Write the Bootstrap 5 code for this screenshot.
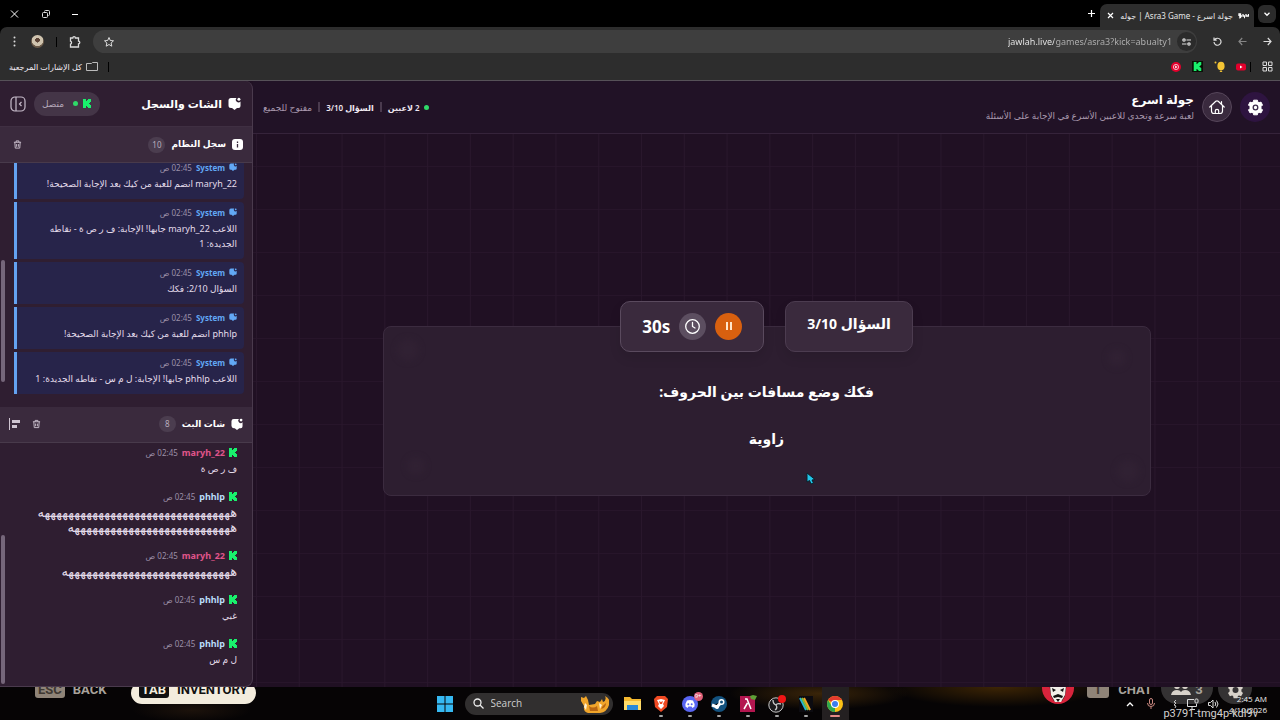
<!DOCTYPE html>
<html lang="ar" dir="rtl">
<head>
<meta charset="utf-8">
<meta name="viewport" content="width=device-width, initial-scale=1">
<title>جولة اسرع - Asra3 Game | جوله</title>
<link href="https://cdn.jsdelivr.net/npm/bootstrap@5.3.0/dist/css/bootstrap.min.css" rel="stylesheet">
<style>
  body { font-family: "Noto Sans", "DejaVu Sans", sans-serif; background: #000; color: #f4eef6; font-size: 9px; line-height: 15px; }
  button, input { font-family: inherit; }
  svg { display: block; flex: none; }
  .bare { background: none; border: 0; padding: 0; color: inherit; display: flex; align-items: center; justify-content: center; flex: none; }
  .desktop { height: 100vh; }
  .page-body { min-height: 0; background: #201023; }
  /* browser frame */
  .titlebar { height: 27px; padding: 0 4px 0 8px; }
  .window-keys { gap: 21px; }
  .tab-menu { width: 18px; height: 18px; border-radius: 6px; background: #2b2b2b; }
  .browser-tab { height: 23px; background: #2d2d2d; border-radius: 7px 7px 0 0; padding: 0 5px 0 7px; color: #e6e6e6; gap: 5px; }
  .tab-name { font-size: 8px; width: 114px; }
  .toolbar { height: 29px; background: #2d2d2d; border-radius: 7px 7px 0 0; padding: 0 8px 0 10px; color: #dcdcdc; }
  .addressbar { height: 23px; border-radius: 12px; background: #3e3e3e; padding: 0 1px 0 10px; gap: 3px; }
  .site-info { width: 19px; height: 19px; border-radius: 50%; background: #2b2b2b; }
  .url-field { font-size: 9px; line-height: 16px; width: 166px; padding: 0; border: 0; color: transparent; background: linear-gradient(90deg, #f2f2f2 46px, #b4b4b4 46px); -webkit-background-clip: text; background-clip: text; }
  .bookmarks { height: 25px; background: #2d2d2d; border-bottom: 1px solid #565158; padding: 0 7px 3px 9px; }
  .bookmarks a, .crumbs a { color: inherit; text-decoration: none; }
  .all-marks { font-size: 8px; }
  .tick { width: 1px; height: 10px; background: #000; }
  .avatar { width: 13px; height: 13px; border-radius: 50%; background: radial-gradient(circle at 50% 40%, #5b4336 0 22%, #cfc3ae 24% 55%, #6b5a49 60%); }
  /* game */
  .game { background-color: #201023; min-width: 0; }
  .game-head { height: 53px; background: #211226; border-bottom: 1px solid #35233a; padding: 0 10px; }
  .round { width: 30px; height: 30px; border-radius: 50%; }
  .round-gear { background: #2e1440; color: #fff; }
  .round-home { background: #3a2a3e; border: 1px solid #56465a; color: #fff; }
  .game-title { font-size: 12px; line-height: 16px; font-weight: 700; color: #fff; margin: 0; }
  .game-sub { font-size: 9px; color: #a898ad; }
  .crumbs { font-size: 8px; gap: 6px; color: #efe8f1; }
  .crumb-sep { width: 2px; height: 10px; background: #4a3a4e; }
  .dot { width: 5px; height: 5px; border-radius: 50%; background: #2fd968; }
  .board { background-image: linear-gradient(90deg, #29172c 1px, transparent 1px), linear-gradient(#27152a 1px, transparent 1px); background-size: calc(100% / 24) 100%, 100% 43px; background-position: 3px 0, 0 32px; }
  .question { width: 75%; max-width: 768px; background: #2d1e30; border: 1px solid #3b2b3f; border-radius: 8px; padding: 0 24px 45px; }
  .pills { margin-top: -26px; gap: 21px; }
  .pill { height: 51px; border: 1px solid #5a4a5e; border-radius: 10px; background: #3a2a3d; color: #fff; font-weight: 700; padding: 0 21px; box-shadow: 0 6px 12px #00000018; }
  .pill-count { font-size: 14px; border-color: #4c3c50; padding-bottom: 5px; }
  .pill-time { font-size: 17px; gap: 9px; }
  .disc { width: 27px; height: 27px; border-radius: 50%; }
  .disc-pause { background: #d8600f; color: #ffe6cc; }
  .disc-clock { background: #5c4e60; }
  .ask { font-size: 14px; line-height: 23px; font-weight: 700; color: #fff; margin: 0; }
  .blob { position: absolute; border-radius: 50%; background: #34243700; box-shadow: inset 0 0 0 20px #33243680; filter: blur(3px); }
  .pointer { position: absolute; left: 63%; top: 65.6%; }
  /* side panel */
  .side { width: 253px; background: #2f1e31; border: 1px solid #4a3a4d; border-left: 0; border-top: 0; border-radius: 0 8px 8px 0; }
  .side-head { height: 46px; padding: 0 11px 0 10px; border-bottom: 1px solid #3f2f42; }
  .side-title { font-size: 11px; font-weight: 700; margin: 0; color: #fff; gap: 6px; }
  .status { height: 24px; border-radius: 12px; background: #443547; padding: 0 9px 0 8px; gap: 5px; color: #b5a8b9; }
  .sec-head { height: 36px; background: #3a2a3d; border-bottom: 1px solid #483a4b; padding: 0 9px 0 9px; color: #cfc5d2; }
  .sec-title { font-size: 9px; font-weight: 700; margin: 0; color: #fff; gap: 6px; }
  .sec-tools { gap: 12px; }
  .count { width: 17px; height: 16px; border-radius: 8px; background: #4b3d4f; color: #b9adbd; font-size: 8px; line-height: 16px; text-align: center; }
  .pane { flex: 1 1 0; min-height: 0; }
  .feed { flex: 1 1 0; min-height: 0; overflow: hidden; padding: 0 8px 13px 14px; gap: 3px; }
  .feed-chat { padding-bottom: 11px; gap: 2px; }
  .msg { padding: 3px 7px 8px; flex: none; }
  .msg-log { background: #27244a; border-left: 3px solid #64a2f0; border-radius: 0 4px 4px 0; }
  .msg-head { gap: 4px; margin-bottom: 1px; font-size: 8px; }
  .msg-body { margin: 0; color: #e4dcea; font-size: 9px; }
  .laugh { font-size: 13px; line-height: 15px; display: block; white-space: nowrap; }
  .who { font-weight: 700; }
  .who-sys { color: #62a8f5; }
  .who-a { color: #e0558b; font-size: 9px; }
  .who-b { color: #b9dcf8; font-size: 9px; }
  time { color: #9c90a8; }
  .thumb { position: absolute; left: 1px; width: 4px; border-radius: 2px; background: #75667a; }
  .thumb-log { top: 40%; height: 50%; }
  .thumb-chat { top: 38%; height: 61%; }
  /* desktop strip */
  .strip { display: grid; flex: none; height: 33px; overflow: hidden; background: radial-gradient(ellipse 60px 12px at 15% 70%, #1c120b, transparent), radial-gradient(ellipse 90px 16px at 64% 20%, #3a2509, transparent), radial-gradient(ellipse 110px 20px at 78% 0, #3d2505, transparent), #060405; }
  .strip > * { grid-area: 1 / 1; }
  .hud { font-family: Roboto, sans-serif; font-weight: 700; font-size: 13px; line-height: 16px; color: #a8a29b; padding: 0 28px 0 35px; margin-top: -5px; }
  .hud-right { gap: 5px; }
  .keycap { background: #8f8478; color: #3e3832; border-radius: 3px; padding: 0 3px; }
  .inv { background: #f3ecdd; color: #111; border-radius: 12px; height: 22px; padding: 0 8px; }
  .inv .keycap { background: #111; color: #f3ecdd; }
  .hud-pill { background: #343233; border-radius: 0 0 16px 16px; height: 22px; width: 52px; }
  .hud-gear { width: 34px; }
  .taskbar { display: grid; grid-template-columns: 1fr auto 1fr; align-items: center; font-family: "Open Sans", sans-serif; }
  .apps { gap: 10px; }
  .app { position: relative; width: 19px; height: 26px; }
  .app.live::after { content: ""; position: absolute; bottom: 0; left: 7px; width: 4px; height: 2px; border-radius: 1px; background: #a5a5a5; }
  .app.front { box-shadow: 0 0 0 4px #242021; background: #242021; }
  .app.front::after { left: 4px; width: 10px; background: #e58a85; }
  .search { width: 148px; height: 22px; border-radius: 11px; background: #383535e0; padding: 0 4px 0 8px; gap: 7px; }
  .search input { background: none; border: 0; width: 80px; padding: 0; font-size: 10px; color: #ddd; }
  .search input::placeholder { color: #cfcfcf; opacity: 1; }
  .tray { gap: 9px; padding-right: 13px; color: #ddd; }
  .clock { font-size: 8px; line-height: 11px; text-align: right; color: #eee; }
  .badge-count { position: absolute; top: 1px; right: -3px; background: #e0607a; color: #fff; border-radius: 5px; font-size: 6px; line-height: 9px; padding: 0 1px; }
  .machine { position: absolute; right: 22px; bottom: 0; font-family: Roboto, sans-serif; font-size: 11px; line-height: 13px; color: #d4d2d0; }
</style>
</head>
<body>
<svg width="0" height="0" class="position-absolute" aria-hidden="true">
  <symbol id="kick" viewBox="0 0 8 9"><path fill="#19f06c" d="M0 0h3v2h1V1h1V0h3v3H7v1H6v1h1v1h1v3H5V8H4V7H3v2H0z"/></symbol>
  <symbol id="chat" viewBox="0 0 13 13"><path fill="currentColor" d="M3 1h5.500a2.500 2.500 0 0 0 4 3.500V9a2 2 0 0 1-2 2H9l-2.500 2L4 11H3a2.500 2.500 0 0 1-2.500-2.500v-5A2.500 2.500 0 0 1 3 1z"/><circle cx="10.900" cy="2.200" r="1.500" fill="currentColor"/></symbol>
  <symbol id="trash" viewBox="0 0 10 10"><path fill="none" stroke="currentColor" d="M1 2.500h8M3.500 2.500V1h3v1.500M2 2.500l.5 6.500h5L8 2.500M4 4.500v3M6 4.500v3"/></symbol>
</svg>

<div class="desktop d-flex flex-column">
  <header>
    <div class="titlebar d-flex align-items-center bg-black">
      <button class="bare tab-menu" aria-label="القائمة"><svg width="8" height="8" viewBox="0 0 8 8" fill="none" stroke="#fff" stroke-width="1.300"><path d="M1.500 2.800 4 5.300l2.500-2.500"/></svg></button>
      <div class="browser-tab d-flex align-items-center align-self-end ms-1 me-1">
        <svg width="11" height="7" viewBox="0 0 11 7" fill="none" stroke="#fff" stroke-width="1.300"><path d="M10.500 2v2H8V2M7 4H5V2M4 4H1M1 4V2h1.500v3.500L1 6M6 5.500h1"/></svg>
        <span class="tab-name text-nowrap">جولة اسرع - Asra3 Game | جوله</span>
        <button class="bare" aria-label="إغلاق التبويب"><svg width="7" height="7" viewBox="0 0 7 7" stroke="#fff" stroke-width="1.200"><path d="M1 1l5 5M6 1 1 6"/></svg></button>
      </div>
      <button class="bare ms-2" aria-label="تبويب جديد"><svg width="9" height="9" viewBox="0 0 9 9" stroke="#fff" stroke-width="1.200"><path d="M4.500 1v7M1 4.500h7"/></svg></button>
      <div class="window-keys d-flex flex-fill justify-content-end">
        <button class="bare" aria-label="تصغير"><svg width="8" height="8" viewBox="0 0 8 8" stroke="#fff"><path d="M1 4.500h6"/></svg></button>
        <button class="bare" aria-label="استعادة"><svg width="8" height="8" viewBox="0 0 8 8" fill="none" stroke="#ddd"><rect x=".5" y="2.500" width="5" height="5" rx="1"/><path d="M2.500 1.500q0-1 1-1h3q1 0 1 1v3q0 1-1 1"/></svg></button>
        <button class="bare" aria-label="إغلاق"><svg width="13" height="8" viewBox="0 0 13 8" stroke="#fff"><path d="M3 .5l7 7M10 .5l-7 7"/></svg></button>
      </div>
    </div>
    <div class="toolbar d-flex align-items-center">
      <div class="d-flex align-items-center gap-3 ms-3">
        <button class="bare" aria-label="السابق"><svg width="9" height="9" viewBox="0 0 9 9" fill="none" stroke="currentColor" stroke-width="1.200"><path d="M.5 4.500H8M4.800 1 8 4.500 4.800 8"/></svg></button>
        <button class="bare opacity-50" aria-label="التالي"><svg width="9" height="9" viewBox="0 0 9 9" fill="none" stroke="currentColor" stroke-width="1.200"><path d="M8.500 4.500H1M4.200 1 1 4.500 4.200 8"/></svg></button>
        <button class="bare" aria-label="تحديث"><svg width="9" height="9" viewBox="0 0 9 9" fill="none" stroke="currentColor" stroke-width="1.200"><path d="M1.800 2.500A3.500 3.500 0 1 1 1 5M1 .5v2.700h2.700"/></svg></button>
      </div>
      <div class="addressbar d-flex align-items-center flex-fill">
        <button class="bare site-info" aria-label="معلومات الموقع"><svg width="9" height="8" viewBox="0 0 9 8" fill="none" stroke="#ddd" stroke-width="1.200"><circle cx="2" cy="2" r="1.200"/><path d="M4.500 2H9M0 6h4.500"/><circle cx="7" cy="6" r="1.200"/></svg></button>
        <input class="url-field" dir="ltr" type="text" aria-label="العنوان" value="jawlah.live/games/asra3?kick=abualty1">
        <span class="flex-fill"></span>
        <button class="bare" aria-label="إضافة إشارة"><svg width="12" height="12" viewBox="0 0 12 12" fill="none" stroke="#ddd"><path d="M6 1.500l1.300 3 3.200.3L8.100 7l.7 3.200L6 8.500l-2.800 1.700.7-3.200L1.500 4.800l3.200-.3z"/></svg></button>
      </div>
      <div class="d-flex align-items-center me-2 pe-1" style="gap:12px">
        <button class="bare" aria-label="الإضافات"><svg width="12" height="12" viewBox="0 0 12 12" fill="none" stroke="currentColor" stroke-width="1.300"><path d="M1.500 2h2.300a1.300 1.300 0 0 1 2.600 0H9.500v3.200a1.300 1.300 0 0 1 0 2.600V11h-8V8.200a1.600 1.600 0 0 0 0-3z"/></svg></button>
        <span class="tick"></span>
        <span class="avatar"></span>
        <button class="bare" aria-label="المزيد"><svg width="9" height="11" viewBox="0 0 9 11" fill="currentColor"><circle cx="4.500" cy="1.500" r="1"/><circle cx="4.500" cy="5.500" r="1"/><circle cx="4.500" cy="9.500" r="1"/></svg></button>
      </div>
    </div>
    <nav class="bookmarks d-flex align-items-center justify-content-between" aria-label="الإشارات">
      <div class="d-flex align-items-center" style="gap:11px">
        <svg width="11" height="11" viewBox="0 0 11 11" fill="none" stroke="#ddd"><path d="M1 1h3.500v3.500H1zM6.500 1H10v3.500H6.500zM1 6.500h3.500V10H1zM6.500 6.500H10V10H6.500z"/></svg>
        <a href="#" aria-label="يوتيوب" class="d-flex align-items-center gap-1"><span class="tick"></span><svg width="10" height="8" viewBox="0 0 10 8"><rect width="10" height="7" y=".5" rx="2" fill="#e3002c"/><path d="M4 2.500 6.500 4 4 5.500z" fill="#fff"/></svg></a>
        <a href="#" aria-label="بالون"><svg width="11" height="11" viewBox="0 0 11 11" fill="#f4c534"><ellipse cx="7" cy="5" rx="3.600" ry="4.300"/><path d="M5.500 11 7 9l1.500 2z"/><circle cx="1.500" cy="1.500" r="1"/></svg></a>
        <a href="#" aria-label="كيك"><svg width="11" height="11" viewBox="0 0 11 11"><path fill="#0a1206" d="M0 0h11v11H0z"/><use href="#kick" x="1.500" y="1" width="8" height="9"/></svg></a>
        <a href="#" aria-label="موسيقى"><svg width="10" height="10" viewBox="0 0 10 10"><circle cx="5" cy="5" r="5" fill="#e3002c"/><circle cx="5" cy="5" r="2.600" fill="none" stroke="#fff" stroke-width=".7"/><path d="M4.200 3.600 6.500 5 4.200 6.400z" fill="#fff"/></svg></a>
      </div>
      <div class="d-flex align-items-center" style="gap:10px">
        <span class="tick"></span>
        <a href="#" class="d-flex align-items-center gap-1 all-marks"><svg width="12" height="9" viewBox="0 0 12 9" fill="none" stroke="#bbb"><path d="M11.500 8.500H.5v-7h5l1-1h5z"/></svg><span>كل الإشارات المرجعية</span></a>
      </div>
    </nav>
  </header>

  <div class="page-body d-flex flex-fill">
    <main class="game d-flex flex-column flex-fill">
      <div class="game-head d-flex align-items-center justify-content-between">
        <div class="d-flex align-items-center gap-2">
          <button class="bare round round-gear" aria-label="الإعدادات"><svg width="17" height="17" viewBox="0 0 17 17"><path fill="currentColor" stroke="currentColor" stroke-width="1" stroke-linejoin="round" d="M6.600 1.200h3.800l.5 2 1.100.6 2-.7 1.500 3-1.500 1.500v1.800l1.500 1.500-1.500 3-2-.7-1.100.6-.5 2H6.600l-.5-2-1.100-.6-2 .7-1.500-3L3 9.400V7.600L1.500 6.100l1.500-3 2 .7 1.100-.6z"/><circle cx="8.500" cy="8.500" r="2.300" fill="none" stroke="#3a2a4a" stroke-width="1.300"/></svg></button>
          <a href="#" class="bare round round-home" aria-label="الرئيسية"><svg width="16" height="16" viewBox="0 0 16 16" fill="none" stroke="currentColor" stroke-width="1.200" stroke-linejoin="round" stroke-linecap="round"><path d="M.8 8 6.800 2.300q1.200-1 2.400 0L15.200 8M2.500 6.500v5.500q0 2.500 2.500 2.500h6q2.500 0 2.500-2.500V6.500M12.500 5V2.500M6.300 14.500v-2.500a1.700 1.700 0 0 1 3.400 0v2.500"/></svg></a>
          <div>
            <h1 class="game-title">جولة اسرع</h1>
            <div class="game-sub">لعبة سرعة وتحدي للاعبين الأسرع في الإجابة على الأسئلة</div>
          </div>
        </div>
        <div class="crumbs d-flex align-items-center">
          <span class="d-flex align-items-center gap-1"><span class="dot"></span><span class="fw-semibold">2 لاعبين</span></span>
          <span class="crumb-sep"></span>
          <span class="fw-semibold">السؤال 3/10</span>
          <span class="crumb-sep"></span>
          <span class="game-sub">مفتوح للجميع</span>
        </div>
      </div>
      <div class="board d-flex flex-fill align-items-center justify-content-center">
        <section class="question position-relative text-center">
          <span class="blob" style="left:13px;top:12px;width:22px;height:22px"></span>
          <span class="blob" style="left:23px;bottom:20px;width:18px;height:18px"></span>
          <span class="blob" style="right:24px;top:22px;width:18px;height:18px"></span>
          <span class="blob" style="right:11px;bottom:13px;width:22px;height:22px"></span>
          <div class="pills d-flex justify-content-center position-relative">
            <div class="pill pill-count d-flex align-items-center">السؤال 3/10</div>
            <div class="pill pill-time d-flex align-items-center">
              <button class="bare disc disc-pause" aria-label="إيقاف مؤقت"><svg width="8" height="8" viewBox="0 0 8 8" fill="currentColor"><path d="M1 0h2v8H1zM5 0h2v8H5z"/></svg></button>
              <span class="bare disc disc-clock"><svg width="17" height="17" viewBox="0 0 17 17" fill="none" stroke="#fff" stroke-width="1.300" stroke-linecap="round"><circle cx="8.500" cy="8.500" r="6.800"/><path d="M8.500 4.500v4l2.500 1.500"/></svg></span>
              <span dir="ltr">30s</span>
            </div>
          </div>
          <p class="ask mt-4 pt-1">فكك وضع مسافات بين الحروف:</p>
          <p class="ask mt-4">زاوية</p>
        </section>
      </div>
    </main>

    <aside class="side d-flex flex-column flex-shrink-0">
      <div class="side-head d-flex align-items-center justify-content-between">
        <h2 class="side-title d-flex align-items-center"><svg width="13" height="13"><use href="#chat"/></svg>الشات والسجل</h2>
        <div class="d-flex align-items-center gap-2">
          <span class="status d-flex align-items-center"><svg width="8" height="9"><use href="#kick"/></svg><span class="dot ms-1"></span>متصل</span>
          <button class="bare" aria-label="طي اللوحة"><svg width="16" height="16" viewBox="0 0 16 16" fill="none" stroke="#c7bccb" stroke-width="1.200"><rect x="1" y="1" width="14" height="14" rx="4"/><path d="M6 1v14M11.500 6 9.500 8l2 2"/></svg></button>
        </div>
      </div>
      <div class="sec-head d-flex align-items-center justify-content-between">
        <h3 class="sec-title d-flex align-items-center"><svg width="11" height="11" viewBox="0 0 11 11"><rect width="11" height="11" rx="3" fill="#fff"/><path d="M5.500 5v3.500M5.500 2.500V4" stroke="#3a2a3d" stroke-width="1.300"/></svg>سجل النظام<span class="count fw-normal">10</span></h3>
        <button class="bare px-1" aria-label="مسح السجل"><svg width="9" height="9"><use href="#trash"/></svg></button>
      </div>
      <div class="pane position-relative d-flex">
        <div class="feed d-flex flex-column justify-content-end" id="log"></div>
        <span class="thumb thumb-log"></span>
      </div>
      <div class="sec-head d-flex align-items-center justify-content-between">
        <h3 class="sec-title d-flex align-items-center"><svg width="12" height="12"><use href="#chat"/></svg>شات البث<span class="count fw-normal">8</span></h3>
        <div class="sec-tools d-flex align-items-center">
          <button class="bare" aria-label="مسح الشات"><svg width="9" height="10"><use href="#trash"/></svg></button>
          <button class="bare" aria-label="محاذاة"><svg width="11" height="12" viewBox="0 0 11 12" fill="currentColor"><path d="M0 0h1v12H0zM3 2h8v3H3zM3 7h5v3H3z"/></svg></button>
        </div>
      </div>
      <div class="pane position-relative d-flex">
        <div class="feed feed-chat d-flex flex-column justify-content-end" id="chatfeed"></div>
        <span class="thumb thumb-chat"></span>
      </div>
    </aside>
  </div>

  <footer class="strip position-relative" dir="ltr">
    <div class="hud d-flex align-items-start justify-content-between">
      <div class="d-flex gap-2 align-items-start"><span class="keycap">ESC</span><span>BACK</span><span class="inv ms-3 d-flex gap-2"><span class="keycap align-self-start">TAB</span>INVENTORY</span></div>
      <div class="hud-right d-flex align-items-start">
        <svg width="32" height="24" viewBox="0 0 32 24"><circle cx="16" cy="6" r="16" fill="#d8243c"/><path d="M7 0h18l-2 14-3 5h-8l-3-5z" fill="#111"/><path d="M8 4h16l-1 9-4 7h-6l-4-7z" fill="#f2efe9"/><path d="M10 6l4 2-3 2zM22 6l-4 2 3 2zM11 14l5-2 5 2-1 2-4-1-4 1zM14 17h4l-2 3z" fill="#111"/></svg>
        <span class="keycap ms-2 px-1">&nbsp;T&nbsp;</span><span class="ms-1 me-1">CHAT</span>
        <span class="hud-pill d-flex justify-content-center gap-1"><svg width="20" height="14" viewBox="0 0 20 14" fill="#d8d2ca"><circle cx="6" cy="4" r="3"/><circle cx="14" cy="4" r="3"/><path d="M0 13q1-5 6-5 3 0 4 2 1-2 4-2 5 0 6 5z"/></svg>3</span>
        <span class="hud-pill hud-gear d-flex justify-content-center"><svg width="17" height="17" viewBox="0 0 17 17"><path d="M6.600 0h3.800l.5 2.900 1.100.6 2.100-.7 1.900 3.300-1.600 1.500v1.800l1.600 1.500-1.900 3.300-2.100-.7-1.100.6-.5 2.100H6.600l-.5-2.100-1.100-.6-2.100.7L1 10.900l1.600-1.500V7.600L1 6.100l1.900-3.300 2.100.7 1.100-.6z" fill="#d8d2ca"/><circle cx="8.500" cy="8" r="3" fill="#343233"/></svg></span>
      </div>
    </div>
    <div class="taskbar">
      <span></span>
      <div class="apps d-flex align-items-center">
        <button class="bare app" aria-label="Start"><svg width="16" height="16" viewBox="0 0 16 16" fill="#36b9f2"><path d="M0 0h7.500v7.500H0zM8.500 0H16v7.500H8.500zM0 8.500h7.500V16H0zM8.500 8.500H16V16H8.500z"/></svg></button>
        <label class="search d-flex align-items-center"><svg width="11" height="11" viewBox="0 0 11 11" fill="none" stroke="#eee" stroke-width="1.300"><circle cx="4.500" cy="4.500" r="3.500"/><path d="M7 7l3.500 3.500"/></svg><input type="text" placeholder="Search" aria-label="Search">
          <svg class="ms-auto" width="28" height="18" viewBox="0 0 28 18"><path fill="#f0a52b" d="M0 2l3 1 2-2 2 4 1 5 6-1 2-3 3 1 2-3 1 3q4-2 2-6 6 3 4 9-2 7-9 8H7q-5-1-4-7L0 6z"/><path fill="#b86512" d="M8 11q4 3 8 0l1 5H9zM20 14q5-1 5-6-4 3-5 6z"/><path fill="#fff0cf" d="M4 8l2 2-1 5-2-3zM18 8l3 2-2 4z"/></svg></label>
        <button class="bare app" aria-label="Files"><svg width="17" height="15" viewBox="0 0 17 15"><path fill="#f5b92f" d="M0 1h6l2 2h9v11H0z"/><path fill="#ffdc69" d="M0 5h17v9H0z"/><path fill="#2988d8" d="M3 9h11v5H3z"/></svg></button>
        <button class="bare app live" aria-label="Brave"><svg width="14" height="16" viewBox="0 0 14 16"><path fill="#f04a23" d="M3 0h8l3 3-1 8-6 5-6-5-1-8z"/><path fill="#fff" d="M3 4l4-1 4 1-2 4 1 2-3 3-3-3 1-2z"/><path fill="#f04a23" d="M5 5l2 1 2-1-1 3H6z"/></svg></button>
        <button class="bare app live" aria-label="Discord"><svg width="16" height="16" viewBox="0 0 16 16"><circle cx="8" cy="8" r="8" fill="#5865f2"/><path fill="#fff" d="M5 4.500q3-1 6 0 2 3 1.500 6L10.500 12l-1-1.500h-3L5.500 12l-2-1.500Q3 7.500 5 4.500z"/><circle cx="6.300" cy="8.200" r="1" fill="#5865f2"/><circle cx="9.700" cy="8.200" r="1" fill="#5865f2"/></svg><span class="badge-count">9+</span></button>
        <button class="bare app live" aria-label="Steam"><svg width="16" height="16" viewBox="0 0 16 16"><circle cx="8" cy="8" r="8" fill="#13527f"/><path stroke="#fff" stroke-width="3" d="M1 9l5 2 4-4.500"/><circle cx="10.500" cy="6" r="3" fill="#fff"/><circle cx="10.500" cy="6" r="1.500" fill="#13527f"/><circle cx="6" cy="11" r="2" fill="#fff"/></svg></button>
        <button class="bare app live" aria-label="Launcher"><svg width="18" height="17" viewBox="0 0 18 17"><path fill="#b3164f" d="M1 1h15v16H1z"/><path fill="none" stroke="#fff" stroke-width="1.500" d="M6 4h2l4 10M8.500 8 5 14"/><path fill="#5fa037" d="M11 1l3-1 4 1-2 4-4-1z"/></svg></button>
        <button class="bare app live" aria-label="OBS"><svg width="18" height="18" viewBox="0 0 18 18"><circle cx="8" cy="10" r="7.200" fill="#1b1a1c" stroke="#c8c8c8"/><path fill="none" stroke="#c8c8c8" stroke-width="1.300" d="M5 5q0 4 3 5M13 9q-4-1-5 1M7 15q3-2 1-5"/><circle cx="14" cy="4" r="4" fill="#f01515"/></svg></button>
        <button class="bare app live" aria-label="Editor"><svg width="16" height="16" viewBox="0 0 16 16"><path fill="#0c0b10" d="M1 0h14v16H1z"/><path stroke="#24b3d8" stroke-width="2" d="M2 2l6 12"/><path stroke="#7dc242" stroke-width="2" d="M4 2l6 12"/><path stroke="#f6a623" stroke-width="2" d="M6 2l6 12"/></svg></button>
        <button class="bare app live front" aria-label="Chrome"><svg width="16" height="16" viewBox="0 0 16 16"><circle cx="8" cy="8" r="8" fill="#fbc116"/><path fill="#e33b2e" d="M8 8 1.100 4A8 8 0 0 1 14.900 4H8z"/><path fill="#2da94f" d="M8 8v8A8 8 0 0 1 1.100 4l3.500 6z"/><circle cx="8" cy="8" r="4" fill="#fff"/><circle cx="8" cy="8" r="3" fill="#3b7ded"/></svg></button>
      </div>
      <div class="tray d-flex align-items-center justify-content-end">
        <svg width="8" height="6" viewBox="0 0 8 6" fill="none" stroke="#fff" stroke-width="1.300"><path d="M1 5l3-3 3 3"/></svg>
        <svg class="ms-1 me-2" width="8" height="11" viewBox="0 0 8 11" fill="none" stroke="#c98880"><rect x="2.500" y=".5" width="3" height="6" rx="1.500"/><path d="M.5 5q0 3.500 3.500 3.500T7.500 5M4 8.500V11"/></svg>
        <svg width="6" height="8" viewBox="0 0 6 8" fill="none" stroke="#ccc"><path d="M4 0 2 2l2 1-2 2 2 1-1 2"/></svg>
        <svg width="12" height="12" viewBox="0 0 12 12" fill="none" stroke="#ddd"><path d="M7 1.500H.5v7h9V6M3 11.500h5M5 8.500v3"/><rect x="8" y="1" width="3" height="4" rx="1"/></svg>
        <svg width="12" height="10" viewBox="0 0 12 10" fill="none" stroke="#ddd"><path d="M.5 3.500h2L5 1v8L2.500 6.500h-2zM7 3q1.500 2 0 4M8.500 1.500q3 3.500 0 7"/></svg>
        <div class="clock">2:45 AM<br>4/10/2026</div>
      </div>
    </div>
    <span class="machine">p3791-tmg4p-kdl9v</span>
  </footer>
</div>
<svg class="pointer" width="10" height="13" viewBox="0 0 10 13" aria-hidden="true"><path d="M1 1v9l2.500-1.500L5 12l2.500-1L6 8l3-.5z" fill="#23c4e8" stroke="#08222c"/></svg>

<script src="https://cdn.jsdelivr.net/npm/bootstrap@5.3.0/dist/js/bootstrap.bundle.min.js"></script>
<script>
  const log = [
    'maryh_22 انضم للعبة من كيك بعد الإجابة الصحيحة!',
    'اللاعب maryh_22 جابها! الإجابة: ف ر ص ة - نقاطه الجديدة: 1',
    'السؤال 2/10: فكك',
    'phhlp انضم للعبة من كيك بعد الإجابة الصحيحة!',
    'اللاعب phhlp جابها! الإجابة: ل م س - نقاطه الجديدة: 1'
  ];
  const laugh = n => `<span class="laugh">${'ه'.repeat(n)}</span>`;
  const chat = [
    ['maryh_22', 'a', 'ف ر ص ة'],
    ['phhlp', 'b', laugh(33) + laugh(28)],
    ['maryh_22', 'a', laugh(29)],
    ['phhlp', 'b', 'غبي'],
    ['phhlp', 'b', 'ل م س']
  ];
  const row = (box, icon, who, cls, text) =>
    `<article class="msg ${box}"><div class="msg-head d-flex align-items-center">${icon}<span class="who ${cls}">${who}</span><time>02:45 ص</time></div><p class="msg-body">${text}</p></article>`;
  document.getElementById('log').innerHTML = log.map(t => row('msg-log', '<svg width="8" height="8" class="who-sys"><use href="#chat"/></svg>', 'System', 'who-sys', t)).join('');
  document.getElementById('chatfeed').innerHTML = chat.map(c => row('', '<svg width="8" height="9"><use href="#kick"/></svg>', c[0], 'who-' + c[1], c[2])).join('');
</script>
</body>
</html>
